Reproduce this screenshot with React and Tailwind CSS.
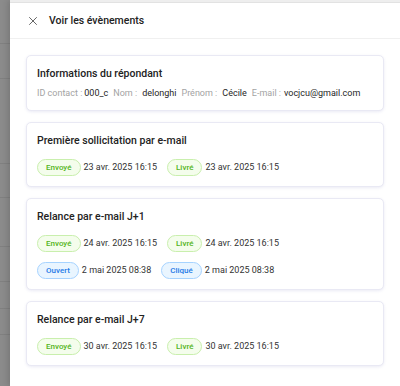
import { X } from "lucide-react";

const events = [
  {
    title: "Première sollicitation par e-mail",
    rows: [
      [
        { label: "Envoyé", tone: "green", date: "23 avr. 2025 16:15" },
        { label: "Livré", tone: "green", date: "23 avr. 2025 16:15" },
      ],
    ],
  },
  {
    title: "Relance par e-mail J+1",
    rows: [
      [
        { label: "Envoyé", tone: "green", date: "24 avr. 2025 16:15" },
        { label: "Livré", tone: "green", date: "24 avr. 2025 16:15" },
      ],
      [
        { label: "Ouvert", tone: "blue", date: "2 mai 2025 08:38" },
        { label: "Cliqué", tone: "blue", date: "2 mai 2025 08:38" },
      ],
    ],
  },
  {
    title: "Relance par e-mail J+7",
    rows: [
      [
        { label: "Envoyé", tone: "green", date: "30 avr. 2025 16:15" },
        { label: "Livré", tone: "green", date: "30 avr. 2025 16:15" },
      ],
    ],
  },
];

const contact = [
  { label: "ID contact :", value: "000_c", gap: "ml-[2px]" },
  { label: "Nom :", value: "delonghi", gap: "ml-[5px]" },
  { label: "Prénom :", value: "Cécile", gap: "ml-[5px]" },
  { label: "E-mail :", value: "vocjcu@gmail.com", gap: "ml-[3px]" },
];

function Tag({ label, tone }) {
  const cls =
    tone === "green"
      ? "bg-[#f4fdec] border-[#c9efad] text-[#52b41a]"
      : "bg-[#e9f5ff] border-[#a6d3ff] text-[#1f7ae6]";
  return (
    <span className={`inline-flex items-center h-[17px] px-[8px] rounded-full border text-[8px] font-medium ${cls}`}>
      {label}
    </span>
  );
}

function Card({ children }) {
  return (
    <div className="bg-white border border-[#e9e9f4] rounded-[5px] shadow-[0_1px_3px_rgba(90,90,170,0.12)] px-[10px] pt-[10px] pb-[10px]">
      {children}
    </div>
  );
}

export default function App() {
  // lines of the page behind the overlay
  const stripRows = [44, 35, 85, 34, 49, 35, 27, 26];

  return (
    <div className="w-[400px] h-[386px] overflow-hidden flex bg-white font-['Roboto',sans-serif]">
      <div className="w-[10px] shrink-0 bg-[#8b8b8b] flex flex-col">
        {stripRows.map((h, i) => (
          <div key={i} className="border-b border-[#808080] shrink-0" style={{ height: h }} />
        ))}
      </div>

      <div className="flex-1 flex flex-col shadow-[-2px_0_6px_rgba(0,0,0,0.15)]">
        <div className="h-[3px] bg-[#eeeeee] border-b border-[#e2e2e2]" />
        <div className="h-[36px] flex items-center gap-[9px] pl-[16px] border-b border-[#f0f0f0]">
          <X size={14} strokeWidth={1.4} className="text-[#444]" />
          <span className="text-[10.5px] font-medium text-[#222]">Voir les évènements</span>
        </div>

        <div className="px-[16px] pt-[16px] flex flex-col gap-[11px]">
          <Card>
            <h3 className="text-[10.5px] leading-4 font-medium text-[#222]">Informations du répondant</h3>
            <div className="mt-[4px] flex items-center gap-[5px] text-[9px] leading-[14px]">
              {contact.map((c) => (
                <span key={c.label} className="flex items-center">
                  <span className="text-[#a3a3a3]">{c.label}</span>
                  <span className={`text-[#262626] ${c.gap}`}>{c.value}</span>
                </span>
              ))}
            </div>
          </Card>

          {events.map((ev) => (
            <Card key={ev.title}>
              <h3 className="text-[10.5px] leading-4 font-medium text-[#222]">{ev.title}</h3>
              <div className="mt-[10px] flex flex-col gap-[10px]">
                {ev.rows.map((row, i) => (
                  <div key={i} className="flex items-center gap-[10px] h-[17px]">
                    {row.map((it) => (
                      <div key={it.label} className="flex items-center gap-[3px]">
                        <Tag label={it.label} tone={it.tone} />
                        <span className="text-[9px] text-[#333]">{it.date}</span>
                      </div>
                    ))}
                  </div>
                ))}
              </div>
            </Card>
          ))}
        </div>
      </div>
    </div>
  );
}
